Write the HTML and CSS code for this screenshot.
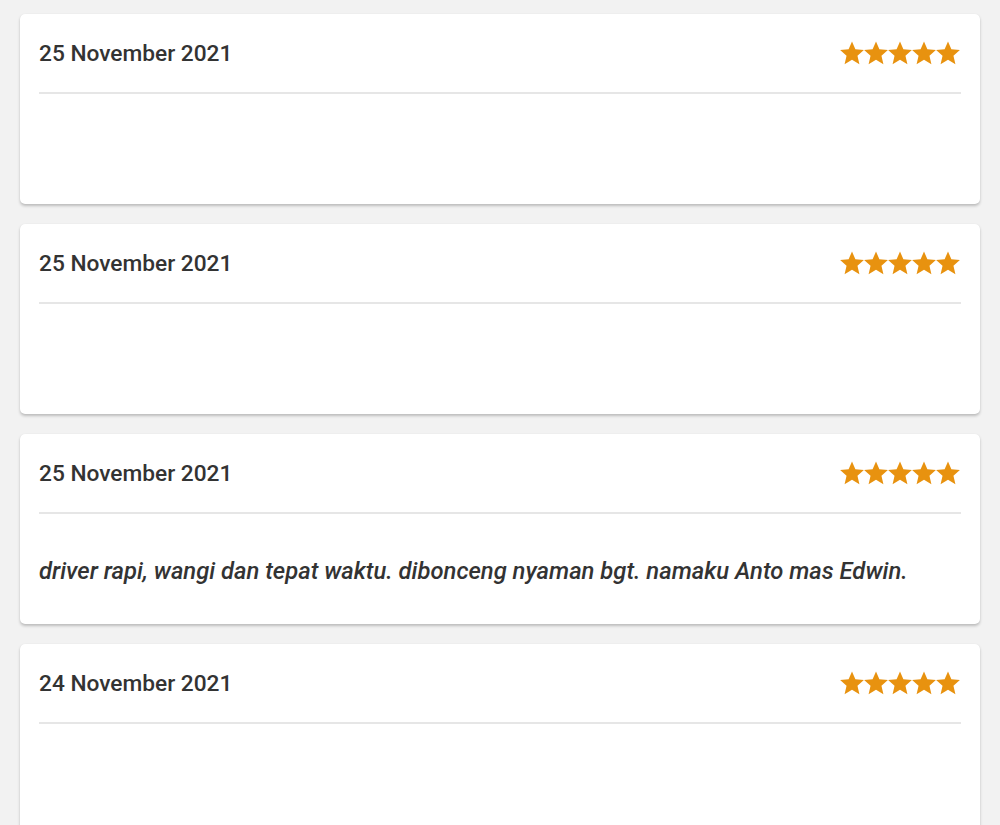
FILE: index.html
```html
<!DOCTYPE html>
<html lang="id">
<head>
<meta charset="utf-8">
<link rel="stylesheet" href="styles.css">
</head>
<body>
<svg width="0" height="0" class="defs">
  <defs>
    <symbol id="star" viewBox="1 1.2 22 22">
      <path d="M12 1.6l3.1 7.2 7.8.7-5.9 5.2 1.8 7.7L12 18.3l-6.8 4.1 1.8-7.7-5.9-5.2 7.8-.7z"/>
    </symbol>
  </defs>
</svg>
<main class="list">
  <section class="card">
    <div class="head">
      <span class="date">25 November 2021</span>
      <span class="stars"><svg><use href="#star"/></svg><svg><use href="#star"/></svg><svg><use href="#star"/></svg><svg><use href="#star"/></svg><svg><use href="#star"/></svg></span>
    </div>
    <div class="body"></div>
  </section>
  <section class="card">
    <div class="head">
      <span class="date">25 November 2021</span>
      <span class="stars"><svg><use href="#star"/></svg><svg><use href="#star"/></svg><svg><use href="#star"/></svg><svg><use href="#star"/></svg><svg><use href="#star"/></svg></span>
    </div>
    <div class="body"></div>
  </section>
  <section class="card">
    <div class="head">
      <span class="date">25 November 2021</span>
      <span class="stars"><svg><use href="#star"/></svg><svg><use href="#star"/></svg><svg><use href="#star"/></svg><svg><use href="#star"/></svg><svg><use href="#star"/></svg></span>
    </div>
    <div class="body"><p class="review">driver rapi, wangi dan tepat waktu. dibonceng nyaman bgt. namaku Anto mas Edwin.</p></div>
  </section>
  <section class="card">
    <div class="head">
      <span class="date">24 November 2021</span>
      <span class="stars"><svg><use href="#star"/></svg><svg><use href="#star"/></svg><svg><use href="#star"/></svg><svg><use href="#star"/></svg><svg><use href="#star"/></svg></span>
    </div>
    <div class="body"></div>
  </section>
</main>
</body>
</html>
```

FILE: styles.css
```css
html, body {
  margin: 0;
  padding: 0;
  background: #f2f2f2;
  font-family: Roboto, "Liberation Sans", sans-serif;
  color: #333333;
  overflow: hidden;
}
.defs { position: absolute; }
.list {
  display: flex;
  flex-direction: column;
  gap: 20px;
  padding: 14px 20px 0 20px;
}
.card {
  background: #ffffff;
  border-radius: 5px;
  box-shadow: 0 2px 3px rgba(0, 0, 0, 0.22), 0 0 1px rgba(0, 0, 0, 0.08);
  padding: 20px 19px 0 19px;
  height: 190px;
  box-sizing: border-box;
}
.head {
  display: flex;
  align-items: center;
  justify-content: space-between;
  height: 38px;
  padding-bottom: 20px;
  border-bottom: 2px solid #e6e6e6;
}
.date {
  font-size: 22.7px;
  font-weight: 500;
  letter-spacing: 0;
}
.stars {
  display: flex;
  gap: 0;
  margin-top: -1px;
  margin-right: 1px;
}
.stars svg {
  width: 24px;
  height: 24px;
  fill: #e8920f;
}
.body {
  padding-top: 43px;
}
.review {
  margin: 0;
  font-size: 23.8px;
  line-height: 28px;
  font-style: italic;
  font-weight: 500;
}
```
